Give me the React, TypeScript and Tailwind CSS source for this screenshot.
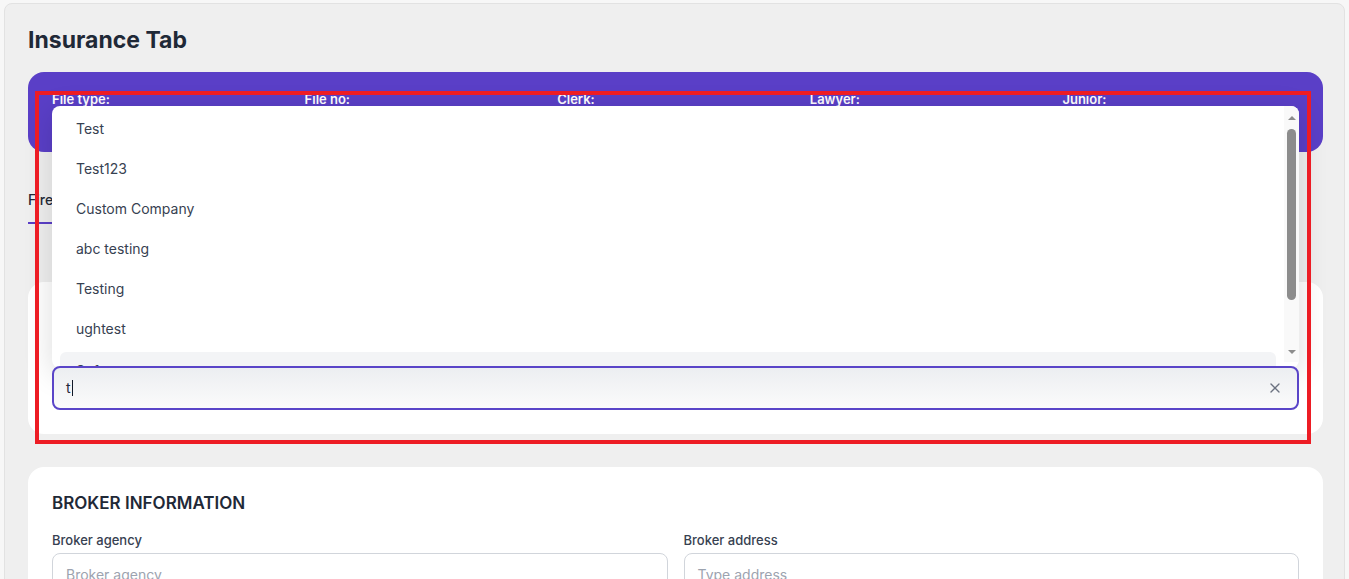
import React from "react";
import { X } from "lucide-react";

const options = ["Test", "Test123", "Custom Company", "abc testing", "Testing", "ughtest"];
const fileInfo = ["File type:", "File no:", "Clerk:", "Lawyer:", "Junior:"];

export default function App() {
  return (
    <div
      className="relative h-[579px] overflow-hidden bg-[#f7f7f7] pl-[4px] pr-[4px] pt-[3px]"
      style={{ fontFamily: "Inter, 'Noto Sans', sans-serif" }}
    >
      <div className="min-h-[590px] rounded-t-lg border border-[#e2e2e2] bg-[#efefef] pl-[23px] pr-[21px] pt-[20px]">
        <h1 className="text-[23px] font-bold leading-8 text-[#1f2937]">Insurance Tab</h1>

        {/* file summary banner */}
        <div className="mt-4 grid h-[80px] grid-cols-5 gap-4 rounded-2xl bg-[#5a3fc7] px-6 pt-[17px] text-[13px] text-white">
          {fileInfo.map((label) => (
            <div key={label}>
              <p className="font-semibold leading-5">{label}</p>
              <p className="leading-5">-</p>
            </div>
          ))}
        </div>

        {/* tabs */}
        <div className="mt-[38px] flex gap-8">
          <div className="border-b-2 border-[#5a3fc7] pb-[12px] text-sm font-medium leading-5 text-[#1f2937]">
            Fire Insurance
          </div>
          <div className="pb-[12px] text-sm font-medium leading-5 text-[#6b7280]">Liability Insurance</div>
        </div>

        {/* insurance company card */}
        <div className="mt-[58px] rounded-2xl bg-white p-6">
          <h2 className="text-[17px] font-semibold uppercase leading-6 text-[#1f2937]">Insurance company</h2>
          <p className="mt-3 text-[13px] font-medium leading-5 text-[#374151]">Company name</p>
          <div className="relative mt-1">
            {/* open dropdown list */}
            <div className="absolute left-0 right-0 top-[-260px] z-10 h-[262px] overflow-hidden rounded-lg bg-white shadow-[0_6px_30px_rgba(0,0,0,0.14)]">
              <div className="pr-[15px] pt-[3px]">
                {options.map((o) => (
                  <div key={o} className="mx-2 flex h-10 items-center px-4 text-sm text-[#374151]">
                    {o}
                  </div>
                ))}
                <div className="mx-2 mt-[3px] flex h-10 items-start rounded-md bg-[#f3f4f6] px-4 pt-[9px] text-sm text-[#374151]">
                  Software
                </div>
              </div>
              {/* scrollbar */}
              <div className="absolute right-0 top-0 flex h-[256px] w-[15px] flex-col items-center bg-[#f9f9f9]">
                <div className="mt-[10px] h-0 w-0 border-x-[4px] border-b-[4px] border-x-transparent border-b-[#8c8c8c]" />
                <div className="mt-[9px] h-[171px] w-[9px] rounded-full bg-[#8c8c8c]" />
                <div className="mt-auto mb-[8px] h-0 w-0 border-x-[4px] border-t-[4px] border-x-transparent border-t-[#8c8c8c]" />
              </div>
            </div>

            <div className="relative z-20 flex h-11 items-center rounded-lg border-2 border-[#5a45c8] bg-gradient-to-b from-[#eceef1] to-[#fbfbfb] pl-[12px] pr-[14px]">
              <span className="text-sm text-[#1f2937]">t</span>
              <span className="ml-[1px] h-[16px] w-px bg-[#111827]" />
              <X className="ml-auto h-4 w-4 text-[#6b7280]" strokeWidth={2} />
            </div>
          </div>
        </div>

        {/* broker card */}
        <div className="mt-[33px] rounded-2xl bg-white px-6 pb-6 pt-6">
          <h2 className="text-[17px] font-semibold uppercase leading-6 text-[#1f2937]">Broker information</h2>
          <div className="mt-[15px] grid grid-cols-2 gap-4">
            <div>
              <p className="text-[13px] font-medium leading-5 text-[#374151]">Broker agency</p>
              <div className="mt-[3px] flex h-11 items-center rounded-lg border border-[#d1d5db] px-[13px] text-sm text-[#9ca3af]">
                Broker agency
              </div>
            </div>
            <div>
              <p className="text-[13px] font-medium leading-5 text-[#374151]">Broker address</p>
              <div className="mt-[3px] flex h-11 items-center rounded-lg border border-[#d1d5db] px-[13px] text-sm text-[#9ca3af]">
                Type address
              </div>
            </div>
          </div>
        </div>
      </div>

      {/* highlight frame */}
      <div className="pointer-events-none absolute left-[35px] top-[91px] z-50 h-[353px] w-[1276px] border-4 border-[#ed1c24]" />
    </div>
  );
}
